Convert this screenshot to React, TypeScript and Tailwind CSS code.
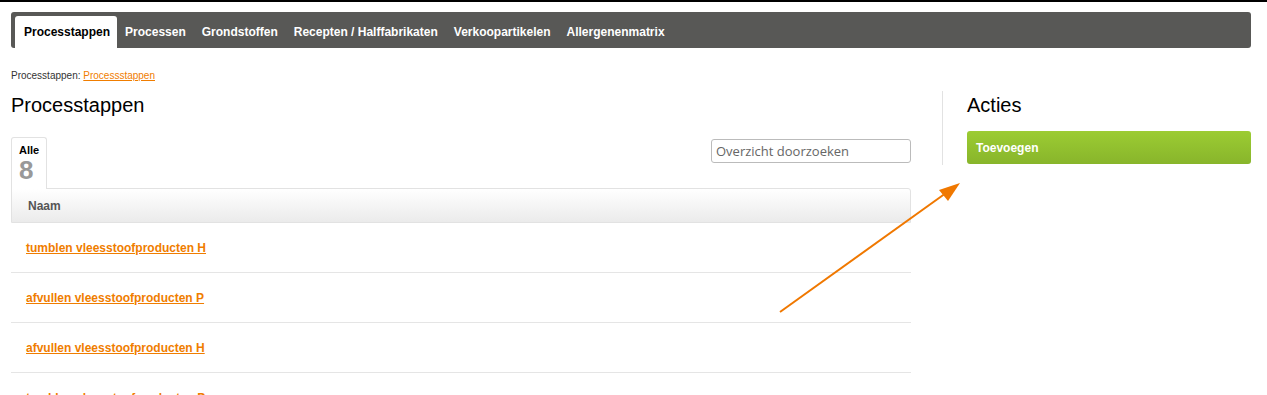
import React from "react";

const tabs = [
  "Processtappen",
  "Processen",
  "Grondstoffen",
  "Recepten / Halffabrikaten",
  "Verkoopartikelen",
  "Allergenenmatrix",
];

const rows = [
  "tumblen vleesstoofproducten H",
  "afvullen vleesstoofproducten P",
  "afvullen vleesstoofproducten H",
  "tumblen vleesstoofproducten P",
];

export default function App() {
  return (
    <div
      className="relative h-[395px] w-[1267px] overflow-hidden bg-white text-black"
      style={{ fontFamily: '"Liberation Sans", Arial, sans-serif' }}
    >
      <div className="h-[2px] w-full bg-black" />

      <div className="px-[11px] pt-[10px] pr-[16px]">
        {/* top nav */}
        <nav className="flex h-[36px] items-end rounded-[3px] bg-[#585856] pl-[4px]">
          {tabs.map((t, i) => (
            <a
              key={t}
              className={
                i === 0
                  ? "flex h-[32px] items-center rounded-t-[3px] bg-white pl-[9px] pr-[7px] text-[12px] font-bold text-black"
                  : "flex h-[32px] items-center px-[8px] text-[12px] font-bold text-white"
              }
            >
              {t}
            </a>
          ))}
        </nav>

        <div className="mt-[20px] text-[10px] leading-[15px] text-[#333]">
          Processtappen:{" "}
          <a className="text-[#f07d00] underline">Processstappen</a>
        </div>

        <div className="mt-[8px] flex">
          {/* left column */}
          <div className="w-[900px]">
            <h1 className="text-[20px] leading-[28px]">Processtappen</h1>

            <div className="mt-[18px] flex items-end justify-between">
              <div className="flex h-[52px] w-[36px] flex-col rounded-t-[3px] border border-b-0 border-[#e2e2e2] bg-white pl-[7px] pt-[6px]">
                <span className="text-[11px] leading-[13px] font-bold">Alle</span>
                <span className="text-[26px] leading-[26px] font-bold text-[#999]">8</span>
              </div>
              <input
                className="mb-[26px] h-[24px] w-[200px] rounded-[3px] border border-[#bbb] px-[4px] text-[13px] text-[#555] placeholder:text-[#666] outline-none"
                style={{ fontFamily: '"Open Sans", "DejaVu Sans", sans-serif' }}
                placeholder="Overzicht doorzoeken"
              />
            </div>

            <div className="-mt-px flex h-[35px] items-center rounded-tr-[3px] border border-[#e2e2e2] bg-gradient-to-b from-white to-[#ebebeb] pl-[16px] text-[12px] font-bold text-[#555]">
              Naam
            </div>

            {rows.map((r) => (
              <div
                key={r}
                className="flex h-[50px] items-center border-b border-[#e5e5e5] pl-[15px]"
              >
                <a className="text-[12px] font-bold text-[#f07d00] underline">{r}</a>
              </div>
            ))}
          </div>

          {/* divider */}
          <div className="ml-[31px] h-[74px] w-px bg-[#e2e2e2]" />

          {/* right column */}
          <div className="ml-[24px] flex-1">
            <h2 className="text-[20px] leading-[28px]">Acties</h2>
            <button className="mt-[12px] flex h-[33px] w-full items-center rounded-[3px] bg-gradient-to-b from-[#9ccc33] to-[#88b52b] pl-[9px] text-[12px] font-bold text-white">
              Toevoegen
            </button>
          </div>
        </div>
      </div>

      {/* annotation arrow */}
      <svg
        className="pointer-events-none absolute left-0 top-0"
        width="1267"
        height="395"
      >
        <line x1="780" y1="312" x2="946" y2="193" stroke="#f07800" strokeWidth="2" />
        <polygon points="960,183 939,190 948,201" fill="#f07800" />
      </svg>
    </div>
  );
}
